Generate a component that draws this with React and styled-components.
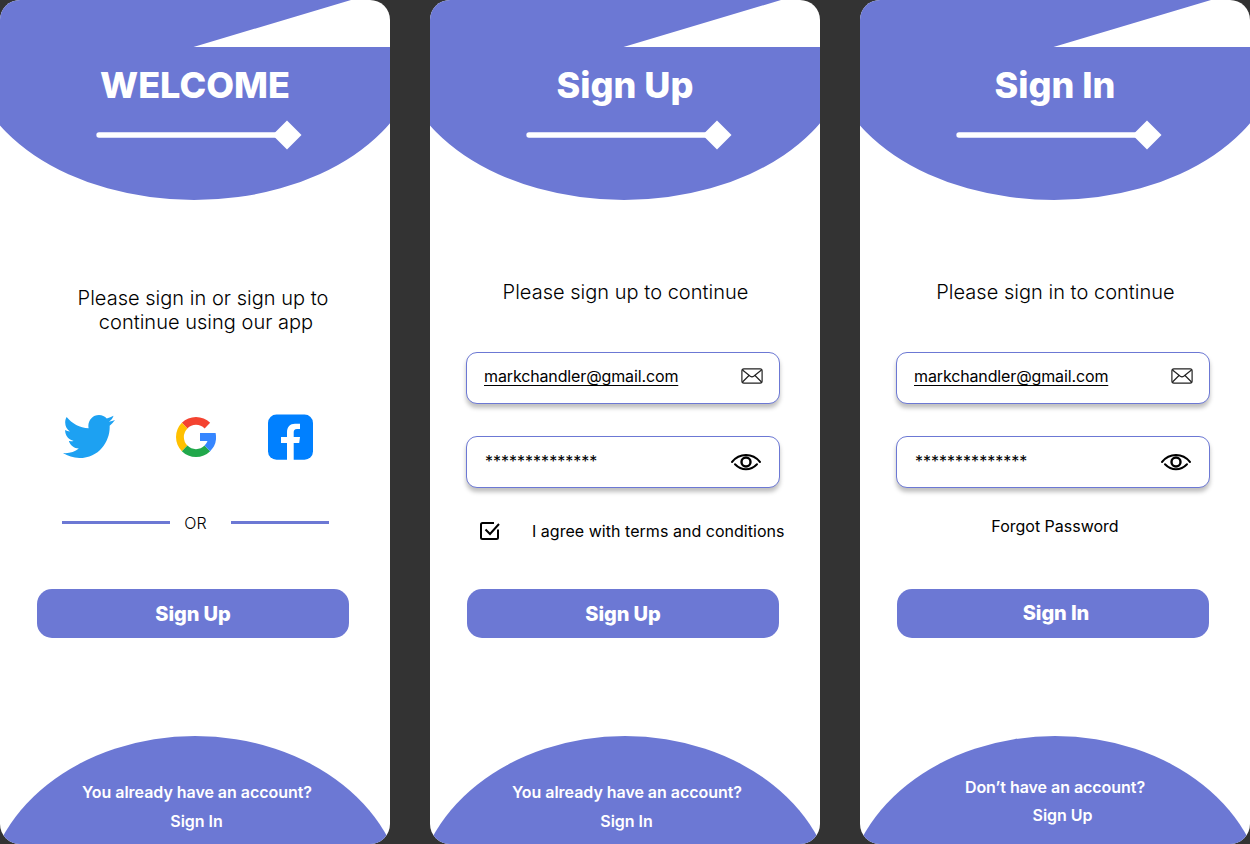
import React from "react";
import styled, { createGlobalStyle } from "styled-components";

const PURPLE = "#6c78d4";

const GlobalStyle = createGlobalStyle`
  * { box-sizing: border-box; }
  body { margin: 0; background: #333333; }
  p, h1 { margin: 0; }
`;

const Board = styled.main`
  display: flex;
  gap: 40px;
  width: 1250px;
  height: 844px;
  font-family: Inter, "Liberation Sans", sans-serif;
  color: #000;
`;

const Screen = styled.section`
  display: flex;
  flex-direction: column;
  width: 390px;
  height: 844px;
  border-radius: 20px;
  overflow: hidden;
  background: #fff;
`;

const Header = styled.header`
  position: relative;
  height: 200px;
  flex: none;
  padding-top: 63px;
`;

const Backdrop = styled.svg`
  position: absolute;
  inset: 0;
  width: 100%;
  height: 100%;
`;

const Title = styled.h1`
  position: relative;
  font-size: 36px;
  line-height: 44px;
  font-weight: 800;
  text-align: center;
  color: #fff;
`;

const Body = styled.div`
  display: flex;
  flex-direction: column;
  height: 389px;
  flex: none;
`;

const Lead = styled.p`
  margin-top: ${(p) => p.$top}px;
  padding-left: ${(p) => p.$shift || 0}px;
  font-size: 20px;
  line-height: 24px;
  font-weight: 300;
  letter-spacing: 0.02px;
  text-align: center;
`;

const LeadEnd = styled.span`
  padding-left: 6px;
`;

const Socials = styled.div`
  display: flex;
  align-items: center;
  margin: 80px 0 0 63px;
  height: 46px;
`;

const Twitter = styled.svg`
  width: 52px;
  height: 43px;
  margin-bottom: 1px;
`;

const Google = styled.svg`
  width: 40px;
  height: 40px;
  margin: 0 52px 0 61px;
`;

const Facebook = styled.svg`
  width: 45px;
  height: 46px;
`;

const Divider = styled.div`
  display: flex;
  align-items: center;
  margin: 53px 61px 0 62px;
  height: 20px;
  font-size: 16px;
  font-weight: 300;
`;

const Rule = styled.span`
  width: ${(p) => p.$width}px;
  height: 3px;
  margin-bottom: 2px;
  background: ${PURPLE};
`;

const Or = styled.span`
  flex: 1;
  padding-right: 10px;
  text-align: center;
  line-height: 20px;
`;

const Field = styled.div`
  display: flex;
  align-items: center;
  justify-content: space-between;
  width: 314px;
  height: 52px;
  flex: none;
  margin: ${(p) => p.$top}px 0 0 36px;
  padding: 0 16px ${(p) => p.$lift}px 17px;
  border: 1px solid ${PURPLE};
  border-radius: 11px;
  background: #fff;
  box-shadow: 0 4px 4px rgba(0, 0, 0, 0.25);
  font-size: 16px;
  line-height: 20px;
`;

const Email = styled.span`
  letter-spacing: -0.13px;
  text-decoration: underline;
  text-decoration-thickness: 1px;
  text-underline-offset: 3px;
  text-decoration-skip-ink: none;
`;

const Dots = styled.span`
  padding-left: 1px;
`;

const MailIcon = styled.svg`
  width: 22px;
  height: 16px;
`;

const EyeIcon = styled.svg`
  width: 32px;
  height: 18px;
  margin: 2px 1px 0 0;
`;

const Agree = styled.label`
  display: flex;
  align-items: center;
  gap: 32px;
  margin: 33px 0 0 49px;
  height: 20px;
  font-size: 16px;
  line-height: 20px;
  letter-spacing: 0.03px;
  white-space: nowrap;
`;

const CheckIcon = styled.svg`
  width: 21px;
  height: 20px;
  flex: none;
`;

const Forgot = styled.p`
  margin-top: 28px;
  font-size: 16px;
  line-height: 20px;
  text-align: center;
`;

const Button = styled.button`
  width: 312px;
  height: 49px;
  flex: none;
  margin-left: 37px;
  padding: 0 0 ${(p) => p.$lift || 0}px ${(p) => p.$shift || 0}px;
  border: 0;
  border-radius: 15px;
  background: ${PURPLE};
  color: #fff;
  font-family: inherit;
  font-size: 20px;
  line-height: 24px;
  font-weight: 800;
  letter-spacing: -0.1px;
`;

const Footer = styled.footer`
  position: relative;
  height: 108px;
  margin-top: auto;
  padding-top: ${(p) => p.$top}px;
  color: #fff;
  font-size: 16px;
  font-weight: 600;
  letter-spacing: -0.04px;
  text-align: center;
`;

const FootLine = styled.p`
  position: relative;
  height: ${(p) => p.$height || 20}px;
  padding-left: ${(p) => p.$shift || 0}px;
  line-height: 20px;
`;

function Top({ title }) {
  return (
    <Header>
      <Backdrop viewBox="0 0 390 200">
        <path d="M-32 47V0H351L193.500 47H420A226 153 0 0 1 -32 47Z" fill={PURPLE} />
        <path d="M99 135H280" stroke="#fff" strokeWidth="5.300" strokeLinecap="round" />
        <path d="M287 120.500L301.500 135L287 149.500L272.500 135Z" fill="#fff" />
      </Backdrop>
      <Title>{title}</Title>
    </Header>
  );
}

function Bottom({ top, question, action, height, shift, actionShift }) {
  return (
    <Footer $top={top}>
      <Backdrop viewBox="0 0 390 108">
        <ellipse cx="195" cy="167" rx="209.500" ry="167" fill={PURPLE} />
      </Backdrop>
      <FootLine $height={height} $shift={shift}>{question}</FootLine>
      <FootLine $shift={actionShift}>{action}</FootLine>
    </Footer>
  );
}

function Credentials() {
  return (
    <>
      <Field $top={48} $lift={4}>
        <Email>markchandler@gmail.com</Email>
        <MailIcon viewBox="0 0 22 16" fill="none" stroke="#222" strokeWidth="1.200">
          <rect x="0.900" y="0.900" width="20.200" height="14.200" rx="2" />
          <path d="M1.500 2L9.300 8.300Q11 9.500 12.700 8.300L20.500 2M1.500 14L8 7.500M20.500 14L14 7.500" />
        </MailIcon>
      </Field>
      <Field $top={32} $lift={2}>
        <Dots>**************</Dots>
        <EyeIcon viewBox="0 0 32 18" fill="none" stroke="#000" strokeWidth="2" strokeLinecap="round">
          <path d="M2 9C9.500 -0.200 22.500 -0.200 30 9M5 11.200C11.500 17.900 20.500 17.900 27 11.200" />
          <circle cx="16" cy="9" r="4.500" strokeWidth="2.400" />
        </EyeIcon>
      </Field>
    </>
  );
}

export default function App() {
  return (
    <>
      <GlobalStyle />
      <Board>
        <Screen>
          <Top title="WELCOME" />
          <Body>
            <Lead $top={86} $shift={16}>
              Please sign in or sign up to
              <br />
              <LeadEnd>continue using our app</LeadEnd>
            </Lead>
            <Socials>
              <Twitter viewBox="0 48 512 416" preserveAspectRatio="none">
                <path
                  fill="#1da1f2"
                  d="M459.370 151.716c.325 4.548.325 9.097.325 13.645 0 138.720-105.583 298.558-298.558 298.558-59.452 0-114.680-17.219-161.137-47.106 8.447.974 16.568 1.299 25.340 1.299 49.055 0 94.213-16.568 130.274-44.832-46.132-.975-84.792-31.188-98.112-72.772 6.498.974 12.995 1.624 19.818 1.624 9.421 0 18.843-1.300 27.614-3.573-48.081-9.747-84.143-51.980-84.143-102.985v-1.299c13.969 7.797 30.214 12.670 47.431 13.319-28.264-18.843-46.781-51.005-46.781-87.391 0-19.492 5.197-37.360 14.294-52.954 51.655 63.675 129.300 105.258 216.365 109.807-1.624-7.797-2.599-15.918-2.599-24.040 0-57.828 46.782-104.934 104.934-104.934 30.213 0 57.502 12.670 76.670 33.137 23.715-4.548 46.456-13.320 66.599-25.340-7.798 24.366-24.366 44.833-46.132 57.827 21.117-2.273 41.584-8.122 60.426-16.243-14.292 20.791-32.161 39.308-52.628 54.253z"
                />
              </Twitter>
              <Google viewBox="-20 -20 40 40">
                <path fill="#f44330" d="M-14.140 -14.140A20 20 0 0 1 14.140 -14.140L8.600 -8.600A12.200 12.200 0 0 0 -8.600 -8.600Z" />
                <path fill="#ffc000" d="M-14.140 -14.140A20 20 0 0 0 -14.140 14.140L-8.600 8.600A12.200 12.200 0 0 1 -8.600 -8.600Z" />
                <path fill="#21a84b" d="M-14.140 14.140A20 20 0 0 0 14.140 14.140L8.600 8.600A12.200 12.200 0 0 1 -8.600 8.600Z" />
                <path fill="#3686ff" d="M14.140 14.140A20 20 0 0 0 19.600 -4H4V4H11.500A12.200 12.200 0 0 1 8.600 8.600Z" />
              </Google>
              <Facebook viewBox="0 0 45 46">
                <rect y="0.500" width="45" height="45.200" rx="8.500" fill="#0080ff" />
                <path
                  fill="#fff"
                  d="M19 46V29H13V23H19V18.500C19 12.500 22 9.700 27 9.700H32V15H29C26.500 15 25.700 16.200 25.700 18.500V23H32L31.200 29H25.700V46Z"
                />
              </Facebook>
            </Socials>
            <Divider>
              <Rule $width={108} />
              <Or>OR</Or>
              <Rule $width={98} />
            </Divider>
          </Body>
          <Button>Sign Up</Button>
          <Bottom top={46} height={29} shift={4} actionShift={3} question="You already have an account?" action="Sign In" />
        </Screen>

        <Screen>
          <Top title="Sign Up" />
          <Body>
            <Lead $top={80} $shift={1}>Please sign up to continue</Lead>
            <Credentials />
            <Agree>
              <CheckIcon viewBox="0 0 21 20" fill="none" stroke="#000" strokeWidth="2">
                <path d="M15 2H3.500Q2 2 2 3.500V16.500Q2 18 3.500 18H17.500Q19 18 19 16.500V8.500" />
                <path d="M6.500 8.500L11 13L20 3" />
              </CheckIcon>
              I agree with terms and conditions
            </Agree>
          </Body>
          <Button>Sign Up</Button>
          <Bottom top={46} height={29} shift={4} actionShift={3} question="You already have an account?" action="Sign In" />
        </Screen>

        <Screen>
          <Top title="Sign In" />
          <Body>
            <Lead $top={80} $shift={1}>Please sign in to continue</Lead>
            <Credentials />
            <Forgot>Forgot Password</Forgot>
          </Body>
          <Button $lift={2} $shift={6}>Sign In</Button>
          <Bottom top={41} height={28} actionShift={15} question="Don’t have an account?" action="Sign Up" />
        </Screen>
      </Board>
    </>
  );
}
